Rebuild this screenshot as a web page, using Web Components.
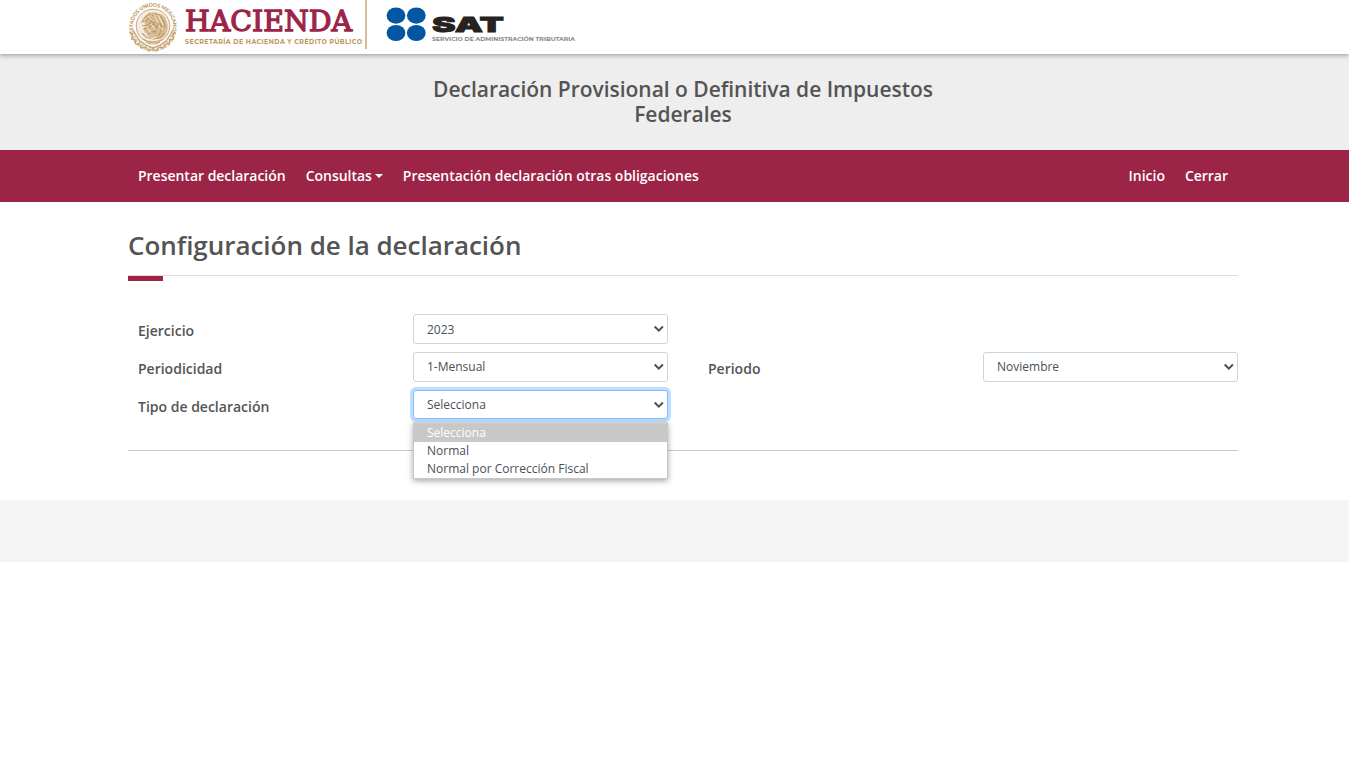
<!DOCTYPE html>
<html lang="es">
<head>
<meta charset="utf-8">
<title>Declaración Provisional o Definitiva de Impuestos Federales</title>
<style>
html,body{margin:0;background:#fff}
body{font-family:"Open Sans","Noto Sans",sans-serif;color:#545454;width:1349px;height:768px;overflow:hidden}
</style>
</head>
<body>
<sat-page></sat-page>
<script>
const define=(name,html,setup)=>customElements.define(name,class extends HTMLElement{
  connectedCallback(){
    if(this.shadowRoot)return;
    const t=document.createElement('template');
    t.innerHTML=html;
    this.attachShadow({mode:'open'}).append(t.content.cloneNode(true));
    if(setup)setup(this,this.shadowRoot);
  }
});

define('mx-seal',`<style>:host{display:block;width:52px;height:54px}svg{display:block;overflow:visible}</style>
<svg width="52" height="54" viewBox="0 0 52 54" fill="none" stroke="#c9a878">
<defs><path id="arc" d="M6.2 33.5A20 20 0 1 1 43.8 33.5"/></defs>
<text fill="#bf9d6b" stroke="none" font-family="Montserrat,Liberation Sans,sans-serif" font-weight="700" font-size="5.2"><textPath href="#arc" textLength="77" lengthAdjust="spacing">ESTADOS UNIDOS MEXICANOS</textPath></text>
<circle cx="25" cy="26" r="16.8" fill="#f4ebdf" stroke-width="1"/>
<path d="M17 18c2-5 8-7 12-4 4-1 8 2 9 6 3 6 2 13-2 17-4 2-9 3-12 1-4-2-8-4-8-9 2-4 0-8 1-11z" fill="#d6bb94" stroke="none"/>
<path d="M22 13l-5 4-3 5 4-1 4-3 3 2-5 5-6 1m1 3 6-1 6-6m-7 12 8-4 2-7M27 13c6 2 10 8 10 15M24 15c5 1 9 7 9 14M22 20c5 3 7 8 5 14m3 2c3-3 4-8 3-13m3 10-4 5-7 1-7-2-4-4" stroke="#c09b66" stroke-width="1.1"/>
<path d="M20 16l5 5m1-6 5 8m-1-8 5 10m-12-1 5 6m-10-4 5 7m8-7 4 4M12 25l4 3m-2 4 5 2m4 5 5-2" stroke="#f9f4ec" stroke-width=".9"/>
<path d="M4 32C7 43 15 49 25 49S43 43 46 32" stroke="#e0ccad" stroke-width="5" stroke-dasharray="3 1"/>
<path d="M1.5 32l3 3-1 4 4 1 0 4 4 0 2 4 4-1 3 4 4-2 4 2 3-4 4 1 2-4 4 0 0-4 4-1-1-4 3-3M5 30l3 5 4 6 6 4 7 3 7-3 6-4 4-6 3-5" stroke="#c19e69" stroke-width="1.1"/>
<path d="M15 39l4 2 6 1 6-1 4-2M18 42l4 2h6l4-2" stroke-width="1.2"/>
</svg>`);

define('brand-logos',`<style>
:host{display:flex;height:54px;align-items:flex-start}
svg{display:block;flex:none}
</style>
<mx-seal></mx-seal>
<svg width="410" height="54" viewBox="180 0 410 54">
<text x="185" y="31" font-family="DejaVu Serif,serif" font-weight="400" font-size="28" fill="#9d2449" stroke="#9d2449" stroke-width="1.3" textLength="167" lengthAdjust="spacingAndGlyphs">HACIENDA</text>
<text x="185" y="44" font-family="Montserrat,Inter,sans-serif" font-weight="700" font-size="6.3" fill="#bc955c" textLength="177" lengthAdjust="spacing">SECRETARÍA DE HACIENDA Y CRÉDITO PÚBLICO</text>
<path d="M366 0V49" stroke="#d0b183" stroke-width="1.7"/>
<g fill="#0357a2"><ellipse cx="396" cy="15.6" rx="9.4" ry="8.1"/><ellipse cx="416.3" cy="15.6" rx="9.4" ry="8.1"/><ellipse cx="396" cy="33" rx="9.4" ry="8.1"/><ellipse cx="416.3" cy="33" rx="9.4" ry="8.1"/></g>
<text x="432" y="31.8" font-family="Inter,sans-serif" font-weight="900" font-size="20.5" fill="#26231f" stroke="#26231f" stroke-width=".8" textLength="72" lengthAdjust="spacingAndGlyphs">SAT</text>
<text x="432" y="41" font-family="Montserrat,Inter,sans-serif" font-weight="700" font-size="5.5" fill="#85858a" textLength="143" lengthAdjust="spacingAndGlyphs">SERVICIO DE ADMINISTRACIÓN TRIBUTARIA</text>
</svg>`);

define('page-header',`<style>
:host{display:block}
.brand{box-sizing:border-box;height:54px;padding-left:128px;background:#fff;box-shadow:0 1px 5px rgba(0,0,0,.4);position:relative}
.title{box-sizing:border-box;height:96px;background:#eee;padding:23px 0 0 413px}
h1{margin:0;width:540px;text-align:center;font-size:21px;line-height:25px;font-weight:600;letter-spacing:-.03px;color:#545454}
</style>
<div class="brand"><brand-logos></brand-logos></div>
<div class="title"><h1><slot></slot></h1></div>`);

define('nav-link',`<style>
:host{display:flex;align-items:center;font-size:14px;line-height:20px;font-weight:600;color:#fff;white-space:nowrap;letter-spacing:-.02px}
i{display:none;margin-left:3px;border:4px solid transparent;border-top-color:#fff;border-bottom:0}
:host([caret]) i{display:block}
</style><span><slot></slot></span><i></i>`);

define('main-nav',`<style>
:host{display:flex;justify-content:space-between;align-items:center;box-sizing:border-box;height:52px;background:#9b2447;padding:0 121px 0 138px}
div{display:flex;gap:20px}
</style>
<div><nav-link>Presentar declaración</nav-link><nav-link caret>Consultas</nav-link><nav-link>Presentación declaración otras obligaciones</nav-link></div>
<div><nav-link>Inicio</nav-link><nav-link>Cerrar</nav-link></div>`);

define('section-title',`<style>
:host{display:block;width:1110px}
h2{margin:0;height:45px;font-size:26px;line-height:31px;font-weight:600;letter-spacing:-.03px;color:#545454;box-sizing:border-box}
.rule{height:6px;border-top:1px solid #ddd;box-sizing:border-box}
.rule i{display:block;width:35px;height:5px;background:#9b2447}
</style><h2><slot></slot></h2><div class="rule"><i></i></div>`);

define('select-box',`<style>
:host{display:block;position:relative;width:255px;height:30px;font-size:12px;color:#495057}
.box{display:flex;align-items:center;justify-content:space-between;box-sizing:border-box;height:30px;border:1px solid #ced4da;border-radius:3px;background:#fff;padding:0 3px 0 13px}
.box span{line-height:16px;margin-top:2px}
:host([raised]) .box span{margin-top:0}
:host([focused]) .box span{margin-top:0}
:host([focused]) .box{height:29px;border-color:#80bdff;box-shadow:0 0 0 3px #bfdeff}
svg{display:block}
</style>
<div class="box"><span></span><svg width="11" height="8" viewBox="0 0 11 8" fill="none" stroke="#495057" stroke-width="2"><path d="M1.7 1.5 5.8 5.6 9.9 1.5"/></svg></div><slot></slot>`,
(el,root)=>{root.querySelector('span').textContent=el.getAttribute('value')});

define('option-list',`<style>
:host{position:absolute;left:0;top:32px;z-index:2;box-sizing:border-box;width:255px;height:57px;border:1px solid #c8c8c8;border-top-color:#d8d8d8;background:#fff;box-shadow:0 2px 6px rgba(0,0,0,.35)}
</style><slot></slot>`);

define('option-item',`<style>
:host{display:block;height:18px;line-height:18px;padding-left:13px;font-size:12px;color:#495057;white-space:nowrap}
:host([active]){background:#c8c8c8;color:#fff;padding-top:1px}
</style><slot></slot>`);

define('field-label',`<style>:host{display:block;font-size:14px;line-height:20px;font-weight:600;color:#545454;padding-top:7px}</style><slot></slot>`);

define('config-form',`<style>
:host{display:grid;grid-template-columns:275px 295px 275px 255px;grid-auto-rows:30px;row-gap:8px;padding-left:10px}
.row{grid-column:1}
</style>
<field-label class="row">Ejercicio</field-label><select-box value="2023"></select-box>
<field-label class="row">Periodicidad</field-label><select-box value="1-Mensual" raised></select-box>
<field-label>Periodo</field-label><select-box value="Noviembre" raised></select-box>
<field-label class="row">Tipo de declaración</field-label>
<select-box value="Selecciona" focused><option-list><option-item active>Selecciona</option-item><option-item>Normal</option-item><option-item>Normal por Corrección Fiscal</option-item></option-list></select-box>`);

define('sat-page',`<style>
:host{display:block}
main{box-sizing:border-box;height:298px;width:1238px;padding:28px 0 0 128px}
config-form{margin-top:33px}
hr{margin:30px 0 0;border:0;border-top:1px solid #c9c9c9}
footer{height:62px;background:#f5f5f5}
</style>
<page-header>Declaración Provisional o Definitiva de Impuestos Federales</page-header>
<main-nav></main-nav>
<main><section-title>Configuración de la declaración</section-title><config-form></config-form><hr></main>
<footer></footer>`);
</script>
</body>
</html>
